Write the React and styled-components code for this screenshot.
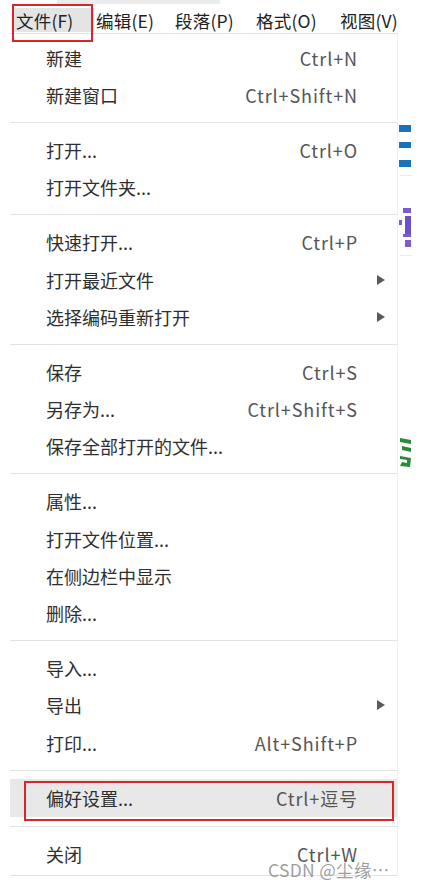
import styled, { createGlobalStyle } from "styled-components";

const GlobalStyle = createGlobalStyle`
    html, body {
        margin: 0;
        padding: 0;
        background: #ffffff;
    }
    body {
        font-family: "Noto Sans CJK SC", "Noto Sans", sans-serif;
    }
`;

const Page = styled.div`
    position: relative;
    width: 433px;
    height: 889px;
    overflow: hidden;
    background: #fff;
`;

const TopStrip = styled.div`
    position: absolute;
    top: 0;
    left: 57px;
    width: 163px;
    height: 4px;
    background: #ececec;
`;

const Behind = styled.svg`
    position: absolute;
    top: 110px;
    left: 398px;
`;

const MenuBar = styled.nav`
    display: flex;
    align-items: center;
    height: 24px;
    padding: 8px 0 1px 14px;
`;

const BarItem = styled.div`
    height: 24px;
    width: ${props => props.w}px;
    padding-left: 2px;
    box-sizing: border-box;
    display: flex;
    align-items: center;
    font-size: 17.5px;
    letter-spacing: 0.2px;
    color: #222;
    white-space: nowrap;
    background: ${props => props.active ? "#e4e4e4" : "transparent"};
`;

const RedBox = styled.div`
    position: absolute;
    border: 2px solid #d8262d;
    pointer-events: none;
    box-sizing: border-box;
    ${props => props.tab ? `
        left: 12px; top: 4px; width: 81px; height: 38px;
    ` : `
        left: 14px; top: 2px; right: 3px; bottom: -4px;
    `}
`;

const Dropdown = styled.div`
    width: 388px;
    margin-left: 10px;
    box-sizing: border-box;
    border-top: 1px solid #e2e2e2;
    border-right: 1px solid #f0f0f0;
    border-bottom: 1px solid #e2e2e2;
    padding: 5px 0 3px;
`;

const Row = styled.div`
    position: relative;
    display: grid;
    grid-template-columns: 1fr auto 40px;
    align-items: center;
    height: ${props => props.highlight ? 38 : 37.2}px;
    padding-left: 36px;
    font-size: 18px;
    color: #2e2e2e;
    background: ${props => props.highlight ? "#e8e8e8" : "transparent"};
`;

const Shortcut = styled.span`
    color: #555;
    font-size: 18px;
    letter-spacing: 0.9px;
    margin-right: -1px;
`;

const Arrow = styled.span`
    justify-self: start;
    margin-left: 20px;
    width: 0;
    height: 0;
    border-top: 5px solid transparent;
    border-bottom: 5px solid transparent;
    border-left: 8px solid #5a5a5a;
`;

const Separator = styled.div`
    height: 18px;
    display: flex;
    align-items: center;

    &::after {
        content: "";
        display: block;
        width: 100%;
        height: 1px;
        background: #e2e2e2;
    }
`;

const Watermark = styled.div`
    position: absolute;
    left: 268px;
    top: 859px;
    font-size: 17.5px;
    letter-spacing: 0.3px;
    line-height: 22px;
    color: rgba(140, 140, 140, 0.85);
    white-space: nowrap;
`;

const menuItems = [
    { label: "文件(F)", w: 80, active: true },
    { label: "编辑(E)", w: 79 },
    { label: "段落(P)", w: 81 },
    { label: "格式(O)", w: 84 },
    { label: "视图(V)", w: 72 },
];

const sections = [
    [
        { label: "新建", key: "Ctrl+N" },
        { label: "新建窗口", key: "Ctrl+Shift+N" },
    ],
    [
        { label: "打开...", key: "Ctrl+O" },
        { label: "打开文件夹..." },
    ],
    [
        { label: "快速打开...", key: "Ctrl+P" },
        { label: "打开最近文件", sub: true },
        { label: "选择编码重新打开", sub: true },
    ],
    [
        { label: "保存", key: "Ctrl+S" },
        { label: "另存为...", key: "Ctrl+Shift+S" },
        { label: "保存全部打开的文件..." },
    ],
    [
        { label: "属性..." },
        { label: "打开文件位置..." },
        { label: "在侧边栏中显示" },
        { label: "删除..." },
    ],
    [
        { label: "导入..." },
        { label: "导出", sub: true },
        { label: "打印...", key: "Alt+Shift+P" },
    ],
    [
        { label: "偏好设置...", key: "Ctrl+逗号", highlight: true },
    ],
    [
        { label: "关闭", key: "Ctrl+W" },
    ],
];

// bits of the document behind the menu that peek out on the right
function PeekingContent() {
    return (
        <Behind width="16" height="360" viewBox="0 0 16 360">
            <rect x="1" y="15" width="12" height="7" fill="#1a73b8" />
            <rect x="1" y="32" width="12" height="6" fill="#1a73b8" />
            <rect x="1" y="50" width="12" height="7" fill="#1a73b8" />
            <rect x="2" y="65" width="12" height="1" fill="#ececec" />
            <rect x="5" y="98" width="8" height="5" fill="#7a5bd0" />
            <rect x="1" y="110" width="3" height="5" fill="#7a5bd0" />
            <rect x="7" y="106" width="6" height="18" fill="#6a4fd0" />
            <rect x="5" y="124" width="8" height="3" fill="#7a5bd0" />
            <rect x="7" y="130" width="6" height="7" fill="#7a5bd0" />
            <rect x="2" y="145" width="12" height="1" fill="#ececec" />
            <path d="M2 328 L13 330 L13 334 L2 332 Z M4 336 L13 338 L13 342 L4 340 Z M2 346 L13 348 L12 357 L2 356 L4 352 L9 353 L9 350 L2 349 Z" fill="#2a8a3a" />
        </Behind>
    );
}

export default function App() {
    return (
        <Page>
            <GlobalStyle />
            <TopStrip />
            <PeekingContent />

            <MenuBar>
                {menuItems.map(m => (
                    <BarItem key={m.label} w={m.w} active={m.active}>
                        {m.label}
                    </BarItem>
                ))}
            </MenuBar>
            <RedBox tab />

            <Dropdown>
                {sections.map((items, i) => (
                    <div key={i}>
                        {i > 0 && <Separator />}
                        {items.map(it => (
                            <Row key={it.label} highlight={it.highlight}>
                                <span>{it.label}</span>
                                <Shortcut>{it.key}</Shortcut>
                                {it.sub ? <Arrow /> : <span />}
                                {it.highlight && <RedBox />}
                            </Row>
                        ))}
                    </div>
                ))}
            </Dropdown>

            <Watermark>CSDN @尘缘…</Watermark>
        </Page>
    );
}
